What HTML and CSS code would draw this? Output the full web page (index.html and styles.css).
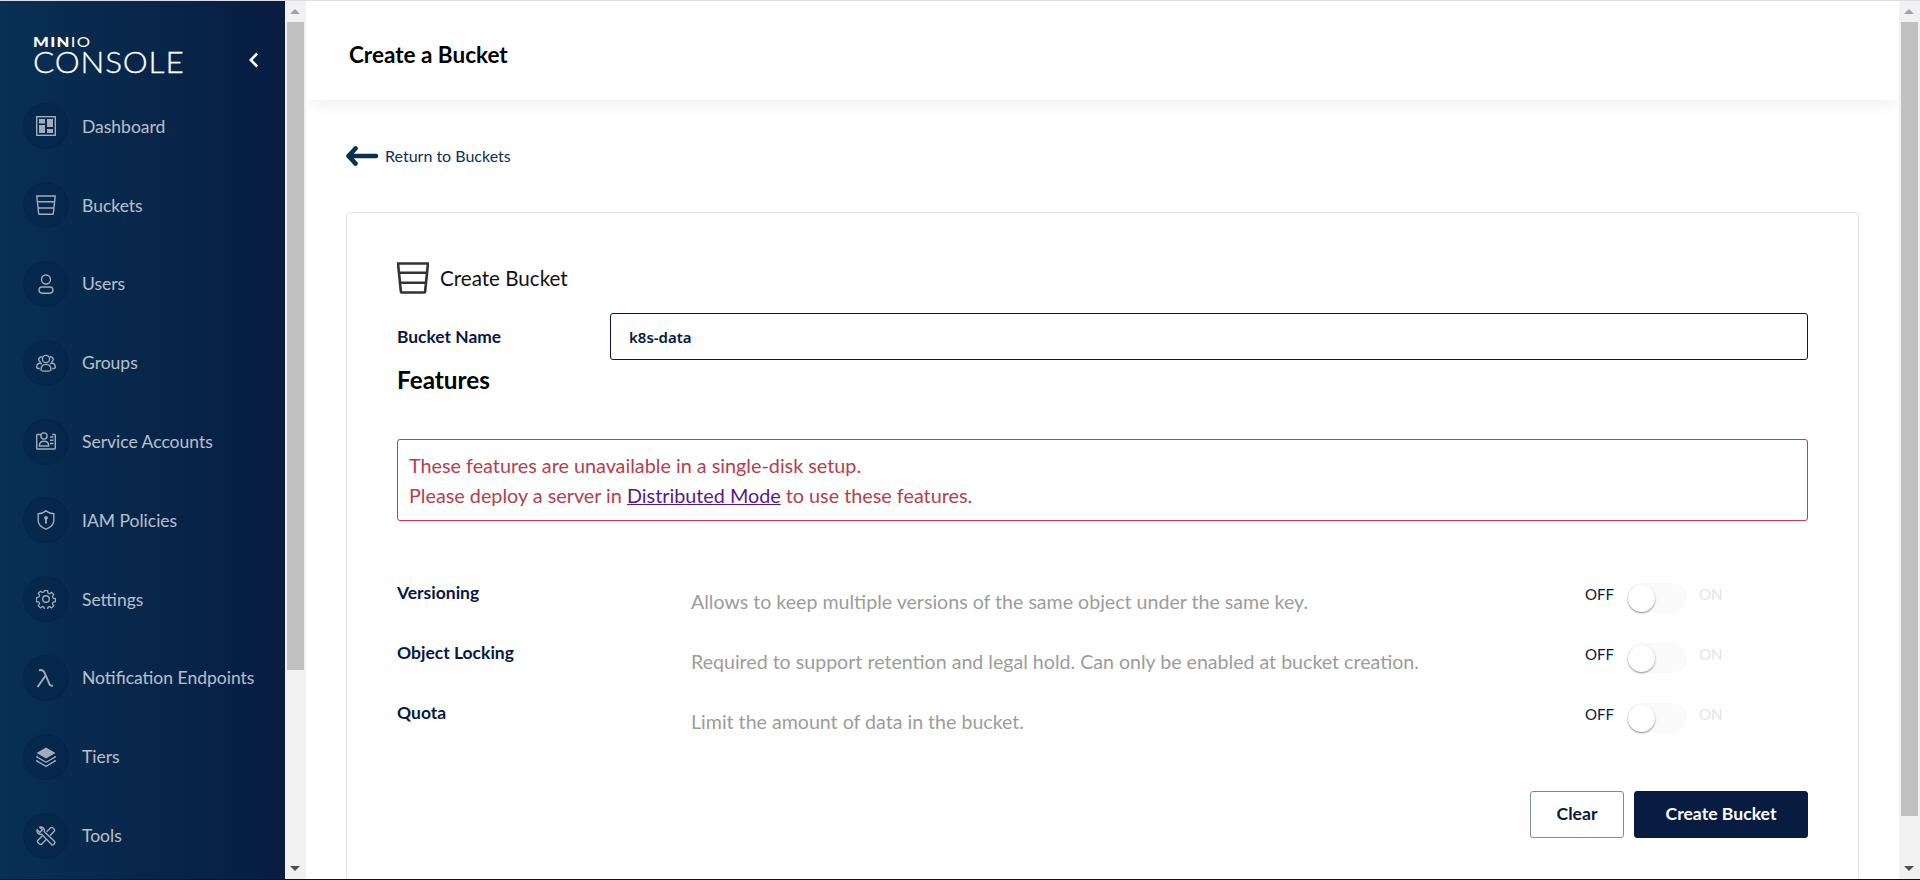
FILE: index.html
```html
<!DOCTYPE html>
<html lang="en">
<head>
<meta charset="utf-8">
<title>MinIO Console - Create a Bucket</title>
<link rel="stylesheet" href="styles.css">
</head>
<body>
<div class="app">
  <aside class="sidebar">
    <div class="brand">
      <div class="logo">
        <div class="logo-minio"><b>MIN</b><span>IO</span></div>
        <div class="logo-console">CONSOLE</div>
      </div>
      <svg class="collapse" viewBox="0 0 10 16"><path d="M8.200 1.500 1.800 8l6.400 6.500" /></svg>
    </div>
    <nav class="menu">
      <a class="item"><span class="disc"><svg viewBox="0 0 20 20"><rect class="o" x=".7" y=".7" width="18.600" height="18.600"/><path class="f" d="M3 3h6v4.500H3zM3 9h6v8H3zM11 3h6v8h-6zM11 13h6v4h-6z"/></svg></span><span class="label">Dashboard</span></a>
      <a class="item"><span class="disc"><svg viewBox="0 0 20 20"><path class="o" d="M.8 1h18.400l-1.900 17.800a.6.6 0 0 1-.6.5H3.300a.6.6 0 0 1-.6-.5zM1.500 6.800h17M2.200 13h15.600"/></svg></span><span class="label">Buckets</span></a>
      <a class="item"><span class="disc"><svg viewBox="0 0 20 20"><circle class="o" cx="10" cy="5.500" r="4.500"/><rect class="o" x="3" y="13" width="14" height="6.200" rx="3.100"/></svg></span><span class="label">Users</span></a>
      <a class="item"><span class="disc"><svg viewBox="0 0 20 20"><circle class="o" cx="10" cy="6" r="3.600"/><path class="o" d="M6.200 3.800a2.600 2.600 0 1 0-1.400 5.200M13.800 3.800a2.600 2.600 0 1 1 1.400 5.200M5 17c0-3.400 2.100-5.600 5-5.600s5 2.200 5 5.600c0 1.500-10 1.500-10 0zM3.800 15.500C1.800 15.500.7 15 .7 14.200c0-2.400 1.500-4 3.300-4 .6 0 1.300.2 1.900.6M16.200 15.500c2 0 3.100-.5 3.100-1.300 0-2.400-1.500-4-3.300-4-.6 0-1.300.2-1.900.6"/></svg></span><span class="label">Groups</span></a>
      <a class="item"><span class="disc"><svg viewBox="0 0 20 20"><path class="o" d="M4.800 2.500H1.500a.8.8 0 0 0-.8.8v12.900c0 .5.4.8.8.8h17c.4 0 .8-.3.8-.8V3.300a.8.8 0 0 0-.8-.8h-2.300"/><circle class="o" cx="8" cy="4" r="3.100"/><path class="o" d="M3.300 14c0-3 1.900-4.800 4.700-4.800s4.700 1.800 4.700 4.800zM14 5h3.500M14 8.300h3.500M14 11.500h3.500"/></svg></span><span class="label">Service Accounts</span></a>
      <a class="item"><span class="disc"><svg viewBox="0 0 20 20"><path class="o" d="M10 .9c2.300 1.900 5 2.800 7.800 2.800v7c0 3.800-3.300 6.600-7.800 8.400-4.500-1.800-7.800-4.600-7.800-8.400v-7C5 3.700 7.700 2.800 10 .9z"/><circle class="f" cx="10" cy="7.800" r="1.900"/><path class="f" d="M9.200 8.500h1.600l.2 5H9z"/></svg></span><span class="label">IAM Policies</span></a>
      <a class="item"><span class="disc"><svg viewBox="0 0 20 20"><path class="o" d="M8.300.8h3.400l.5 2.600 1.800.8 2.200-1.500 2.400 2.400-1.500 2.200.8 1.800 2.600.5v3.400l-2.600.5-.8 1.800 1.500 2.200-2.400 2.400-2.200-1.500-1.800.8-.5 2.600H8.300l-.5-2.600-1.800-.8-2.200 1.500-2.400-2.400 1.500-2.200-.8-1.800-2.600-.5V8.300l2.600-.5.800-1.800-1.500-2.200 2.400-2.400 2.200 1.500 1.800-.8z" transform="translate(1 1) scale(.9)"/><circle class="o" cx="10" cy="10" r="3.300"/></svg></span><span class="label">Settings</span></a>
      <a class="item"><span class="disc"><svg viewBox="0 0 20 20"><path class="lam" d="M3 2.200c3.200-.6 4.700.4 5.700 2.800l5 11.600c.5 1.100 1.500 1.300 3.300 1M9.600 7.500 1.600 19"/></svg></span><span class="label">Notification Endpoints</span></a>
      <a class="item"><span class="disc"><svg viewBox="0 0 20 20"><path class="f" d="M10 .5 19.500 6 10 11.500.5 6z"/><path class="o" d="m1.700 9.300-1 .6L10 15.300l9.300-5.400-1-.6M1.700 13.300l-1 .6L10 19.300l9.300-5.400-1-.6"/></svg></span><span class="label">Tiers</span></a>
      <a class="item"><span class="disc"><svg viewBox="0 0 20 20"><path class="o" d="M1.200 3.800 3.800 6.400 6.400 3.800 3.800 1.200C6.500.4 9 2.500 8.200 5.600L18.600 15.600C19.800 17 17 19.800 15.600 18.600L5.600 8.200C2.500 9 .4 6.500 1.200 3.800z"/><path class="o" d="M10.600 5.800 15 1.600C16.200.6 19.400 3.800 18.400 5L14.200 9.400M6.400 9.800 1.800 14.400C.4 15.800 4.200 19.600 5.600 18.200L10.200 13.600"/></svg></span><span class="label">Tools</span></a>
    </nav>
  </aside>
  <div class="scrollbar side">
    <span class="arrow up"></span>
    <span class="thumb"></span>
    <span class="track"></span>
    <span class="arrow down"></span>
  </div>
  <main class="main">
    <header class="topbar"><h1>Create a Bucket</h1></header>
    <div class="content">
      <a class="back">
        <svg viewBox="0 0 32 20"><path d="M9.500 2.500 2.500 10l7 7.500M2.500 10H30"/></svg>
        <span>Return to Buckets</span>
      </a>
      <section class="card">
        <div class="card-title">
          <svg viewBox="0 0 32 32"><path d="M1 1.500h30l-2.900 28.200a1 1 0 0 1-1 .8H4.900a1 1 0 0 1-1-.8zM2 10.800h28M3 20.800h26"/></svg>
          <span>Create Bucket</span>
        </div>
        <div class="field">
          <label>Bucket Name</label>
          <div class="input">k8s-data</div>
        </div>
        <h2>Features</h2>
        <div class="error">
          <div>These features are unavailable in a single-disk setup.</div>
          <div>Please deploy a server in <a class="link">Distributed Mode</a> to use these features.</div>
        </div>
        <div class="features">
          <div class="feature">
            <div class="f-name">Versioning</div>
            <div class="f-desc">Allows to keep multiple versions of the same object under the same key.</div>
            <div class="toggle"><span class="off">OFF</span><span class="switch"><span class="knob"></span></span><span class="on">ON</span></div>
          </div>
          <div class="feature">
            <div class="f-name">Object Locking</div>
            <div class="f-desc">Required to support retention and legal hold. Can only be enabled at bucket creation.</div>
            <div class="toggle"><span class="off">OFF</span><span class="switch"><span class="knob"></span></span><span class="on">ON</span></div>
          </div>
          <div class="feature">
            <div class="f-name">Quota</div>
            <div class="f-desc">Limit the amount of data in the bucket.</div>
            <div class="toggle"><span class="off">OFF</span><span class="switch"><span class="knob"></span></span><span class="on">ON</span></div>
          </div>
        </div>
        <div class="actions">
          <button class="btn ghost">Clear</button>
          <button class="btn solid">Create Bucket</button>
        </div>
      </section>
    </div>
  </main>
  <div class="scrollbar page">
    <span class="arrow up"></span>
    <span class="thumb"></span>
    <span class="track"></span>
    <span class="arrow down"></span>
  </div>
</div>
</body>
</html>
```
FILE: styles.css
```css
* { box-sizing: border-box; }
html, body { margin: 0; height: 100%; overflow: hidden; }
body {
  font-family: Lato, "Liberation Sans", sans-serif;
  background: #fff;
  border-top: 1px solid #dcdce4;
  border-bottom: 1px solid #111;
}
.app { display: flex; height: 878px; }

.sidebar {
  width: 285px;
  flex: none;
  background: linear-gradient(90deg, #073052 0%, #081c42 100%);
  overflow: hidden;
}
.brand { display: flex; align-items: flex-start; height: 86px; padding: 36px 0 0 33px; position: relative; }
.logo { color: #fff; }
.logo-minio { font-size: 12.5px; line-height: 11px; letter-spacing: 1px; font-weight: 400; transform: scaleX(1.33); transform-origin: left; }
.logo-minio b { font-weight: 900; }
.logo-console { font-size: 30px; line-height: 26px; letter-spacing: .8px; font-weight: 300; -webkit-text-stroke: .3px #fff; transform: scaleX(1.05); transform-origin: left; }
.collapse { width: 10px; height: 16px; position: absolute; left: 249px; top: 51px; fill: none; stroke: #fff; stroke-width: 2.6; }
.menu { display: flex; flex-direction: column; }
.item { display: flex; align-items: center; height: 78.8px; padding-left: 23px; color: #fff; font-size: 17.5px; gap: 13px; }
.label { opacity: .7; }
.disc { width: 46px; height: 46px; border-radius: 50%; background: rgba(0, 22, 62, .22); border: 1px solid rgba(0, 22, 62, .18); display: flex; align-items: center; justify-content: center; flex: none; }
.disc svg { width: 20px; height: 20px; opacity: .62; }
.o { fill: none; stroke: #fff; stroke-width: 1.4; }
.f { fill: #fff; stroke: none; }
.lam { fill: none; stroke: #fff; stroke-width: 1.9; }

.scrollbar { width: 21px; flex: none; background: #f1f1f1; display: flex; flex-direction: column; }
.scrollbar .arrow { height: 21px; flex: none; position: relative; }
.scrollbar .arrow::after { content: ""; position: absolute; left: 5px; border-left: 5px solid transparent; border-right: 5px solid transparent; }
.scrollbar .up::after { top: 8px; border-bottom: 5px solid #a3a3a3; }
.scrollbar .down::after { top: 8px; border-top: 5px solid #505050; }
.scrollbar .thumb { margin: 0 2px; background: #c1c1c1; flex: none; }
.scrollbar .track { flex: 1; }
.side .thumb { height: 648px; }
.page .thumb { height: 794px; }

.main { flex: 1; min-width: 0; overflow: hidden; background: #fff; }
.topbar {
  height: 99px;
  background: #fff;
  display: flex;
  align-items: center;
  padding: 8px 0 0 43px;
  box-shadow: 0 0 18px rgba(0,0,0,.09);
  position: relative;
}
.topbar h1 { margin: 0; font-size: 22.5px; font-weight: 700; color: #000; }
.content { padding: 46px 40px 0 40px; }
.back { display: flex; align-items: center; gap: 7px; height: 20px; color: #07305a; font-size: 16px; }
.back span { margin-top: -1px; }
.back svg { width: 32px; height: 20px; fill: none; stroke: #073052; stroke-width: 4.6; stroke-linecap: round; stroke-linejoin: round; }
.card { margin-top: 46px; border: 1px solid #e5e5e5; border-radius: 3px; height: 800px; padding: 49px 50px 0 50px; }
.card-title { display: flex; align-items: center; gap: 11px; height: 32px; font-size: 20.6px; color: #111; }
.card-title svg { width: 32px; height: 32px; fill: none; stroke: #333; stroke-width: 2.6; }
.field { display: flex; align-items: center; margin-top: 19px; }
.field label { width: 213px; font-size: 17.4px; font-weight: 700; color: #07193e; }
.input { flex: 1; height: 47px; border: 1px solid #07193e; border-radius: 3px; padding-left: 18px; display: flex; align-items: center; font-family: "Noto Sans", sans-serif; font-size: 15px; font-weight: 600; color: #07193e; }
h2 { margin: 4px 0 0; font-size: 24.3px; font-weight: 700; line-height: 32px; color: #000; }
.error { margin-top: 43px; height: 82px; border: 1px solid #c83b51; border-radius: 3px; padding: 10px 11px; color: #b3404f; font-size: 19.8px; line-height: 30px; }
.link { color: #551a8b; text-decoration: underline; }
.features { margin-top: 62px; display: flex; flex-direction: column; gap: 30px; }
.feature { display: flex; height: 30px; position: relative; }
.f-name { width: 294px; font-size: 17.5px; font-weight: 700; color: #07193e; line-height: 30px; margin-top: -5px; }
.f-desc { flex: 1; font-size: 19.6px; color: #9c9c9c; line-height: 30px; margin-top: 4px; }
.toggle { display: flex; align-items: center; font-size: 15px; width: 139px; height: 30px; flex: none; margin-right: 84px; }
.off { width: 42px; color: #07193e; margin-top: -8px; }
.on { color: #e5e5e5; margin-left: 12px; margin-top: -8px; }
.switch { width: 60px; height: 30px; border-radius: 15px; background: #fafafa; position: relative; flex: none; }
.knob { position: absolute; left: 1px; top: 2px; width: 27px; height: 27px; border-radius: 50%; background: #fff; box-shadow: 0 1px 2px rgba(0,0,0,.45); }
.actions { display: flex; justify-content: flex-end; gap: 10px; margin-top: 58px; }
.btn { height: 47px; border-radius: 3px; font-family: Lato, sans-serif; font-size: 17.6px; font-weight: 700; padding: 0 0 2px; }
.ghost { width: 94px; background: #fff; border: 1px solid #7c8ba3; color: #07193e; }
.solid { width: 174px; background: #081c42; border: 1px solid #081c42; color: #fff; }
```
